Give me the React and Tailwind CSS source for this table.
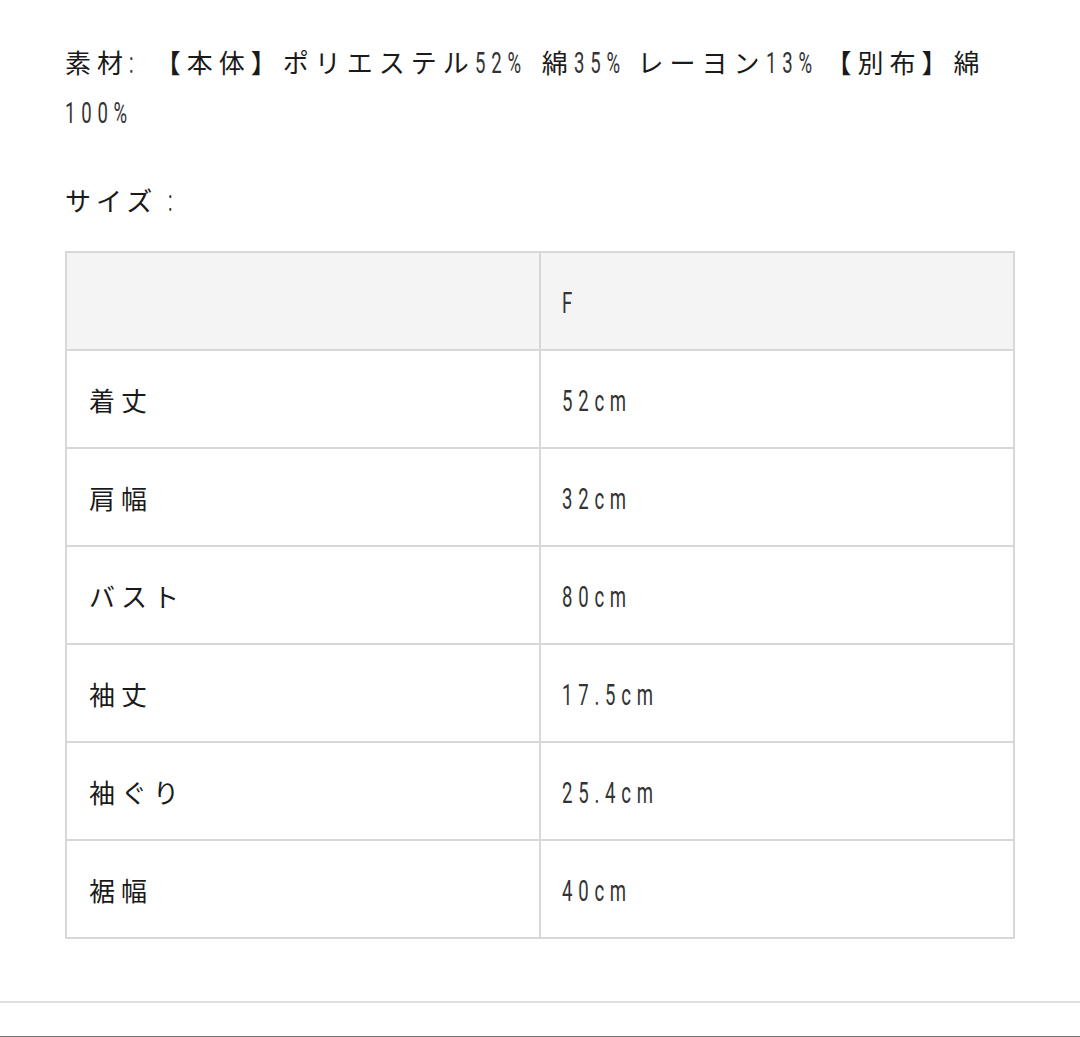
import React from "react";

const rows = [
  ["着丈", "52cm"],
  ["肩幅", "32cm"],
  ["バスト", "80cm"],
  ["袖丈", "17.5cm"],
  ["袖ぐり", "25.4cm"],
  ["裾幅", "40cm"],
];

// narrow latin runs (numbers, %, colon) squeezed to look condensed
const N = ({ w = "", children }) => (
  <span className={`inline-block whitespace-nowrap tracking-normal ${w}`}>
    <span className="inline-block origin-left scale-x-[0.64] font-['Roboto',sans-serif] font-normal text-[29px] leading-none tracking-[9px] text-[#333]">
      {children}
    </span>
  </span>
);

const App = () => {
  return (
    <div className="w-[1080px] h-[1037px] bg-white text-[#1a1a1a] font-['Noto_Sans_CJK_JP',sans-serif] flex flex-col">
      <div className="px-[65px] pt-[37px]">
        {/* Material */}
        <p className="text-[26px] leading-[50px] tracking-[6px]">
          素材<N w="w-[14px]">:</N> 【本体】ポリエステル<N w="w-[55px]">52%</N> 綿<N w="w-[52px]">35%</N> レーヨン<N w="w-[60px]">13%</N>【別布】綿<N w="w-[80px]">100%</N>
        </p>

        {/* Size label */}
        <p className="mt-[38px] text-[26px] leading-[50px] tracking-[5px]">サイズ <N>:</N></p>

        {/* Size table */}
        <table className="mt-[26px] w-[950px] border-collapse border-2 border-[#d8d8d8] table-fixed">
          <thead>
            <tr className="bg-[#f4f4f4] h-[98px]">
              <th className="border-2 border-[#d8d8d8] w-1/2"></th>
              <th className="border-2 border-[#d8d8d8] text-left font-normal pl-[21px] text-[26px]"><N>F</N></th>
            </tr>
          </thead>
          <tbody>
            {rows.map(([label, value]) => (
              <tr key={label} className="h-[98px]">
                <td className="border-2 border-[#d8d8d8] pl-[22px] text-[26px] tracking-[6px]">{label}</td>
                <td className="border-2 border-[#d8d8d8] pl-[21px] text-[26px]"><N>{value}</N></td>
              </tr>
            ))}
          </tbody>
        </table>
      </div>

      <div className="mt-auto">
        <div className="h-[2px] bg-[#e0e0e0] mb-[33px]"></div>
        <div className="h-px bg-[#777]"></div>
      </div>
    </div>
  );
};

export default App;
